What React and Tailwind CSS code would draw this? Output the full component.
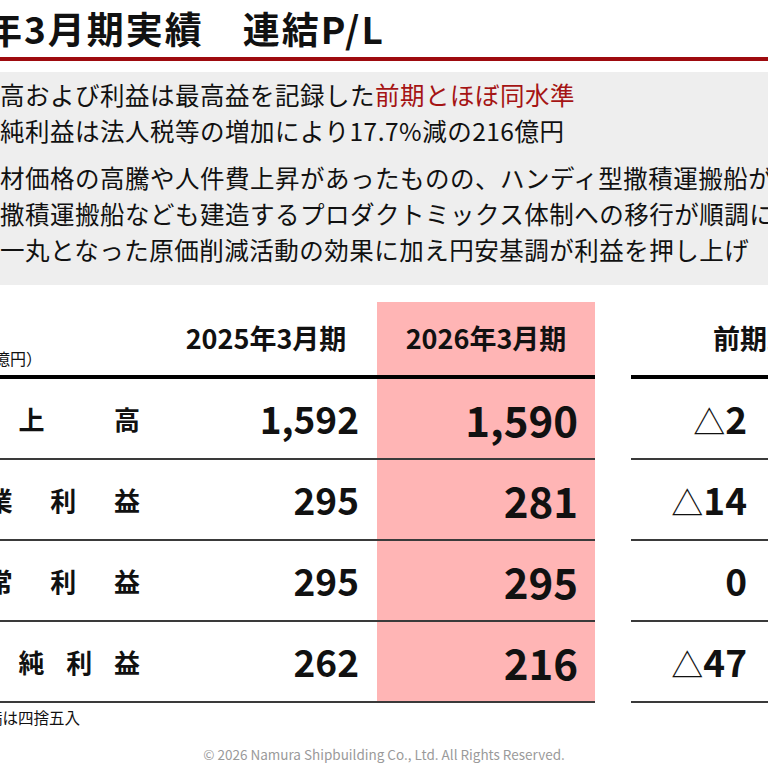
import React from 'react';

const rows = [
  { label: ['売', '上', '高'], prev: '1,592', cur: '1,590', diff: '2', tri: true },
  { label: ['営', '業', '利', '益'], prev: '295', cur: '281', diff: '14', tri: true },
  { label: ['経', '常', '利', '益'], prev: '295', cur: '295', diff: '0', tri: false },
  { label: ['当', '期', '純', '利', '益'], prev: '262', cur: '216', diff: '47', tri: true },
];

const App = () => {
  return (
    <div className="w-[768px] h-[768px] overflow-hidden bg-white text-[#111] [font-family:'Noto_Sans_CJK_JP','Noto_Sans',sans-serif]">
      {/* Title */}
      <div className="h-[57px] flex items-center whitespace-nowrap">
        <h1 className="-ml-[15px] text-[37px] font-bold leading-none tracking-[2px]">年3月期実績　連結P/L</h1>
      </div>
      <div className="h-[4px] bg-[#9e0b0f]" />

      {/* Summary box */}
      <div className="mt-[11px] h-[213px] bg-[#eeeeee] pt-[5px] whitespace-nowrap text-[24.5px] leading-[36px] tracking-[0.5px]">
        <p>
          高および利益は最高益を記録した<span className="text-[#a51414]">前期とほぼ同水準</span>
        </p>
        <p>純利益は法人税等の増加により17.7%減の216億円</p>
        <p className="mt-[11px]">材価格の高騰や人件費上昇があったものの、ハンディ型撒積運搬船が</p>
        <p>撒積運搬船なども建造するプロダクトミックス体制への移行が順調に</p>
        <p>一丸となった原価削減活動の効果に加え円安基調が利益を押し上げ</p>
      </div>

      {/* Table */}
      <div className="mt-[17px] flex">
        {/* Left part */}
        <div className="w-[595px] shrink-0">
          <div className="flex h-[77px] border-b-4 border-black">
            <div className="w-[155px] flex items-end pb-[9px]">
              <span className="-ml-[6px] text-[16px] leading-none whitespace-nowrap">億円）</span>
            </div>
            <div className="w-[222px] flex items-center justify-center text-[27px] font-bold">2025年3月期</div>
            <div className="w-[218px] bg-[#ffb5b5] flex items-center justify-center text-[27px] font-bold">2026年3月期</div>
          </div>
          {rows.map((r) => (
            <div key={r.label.join('')} className="flex h-[81px] border-b-2 border-[#3a3a3a]">
              <div className="w-[155px] flex items-center">
                <div className="-ml-[77px] w-[217px] flex justify-between text-[26px] font-bold leading-none">
                  {r.label.map((c, i) => (
                    <span key={i}>{c}</span>
                  ))}
                </div>
              </div>
              <div className="w-[222px] flex items-center justify-end pr-[18px] text-[37px] font-bold">{r.prev}</div>
              <div className="w-[218px] bg-[#ffb5b5] flex items-center justify-end pr-[17px] text-[42px] font-bold">{r.cur}</div>
            </div>
          ))}
        </div>

        {/* Right part */}
        <div className="ml-[36px] w-[300px] shrink-0">
          <div className="h-[77px] border-b-4 border-black flex items-center pl-[82px] text-[27px] font-bold whitespace-nowrap">
            前期比増減
          </div>
          {rows.map((r) => (
            <div key={r.label.join('')} className="h-[81px] border-b-2 border-[#3a3a3a] flex items-center">
              <div className="w-[137px] text-right pr-[21px] text-[37px] font-bold leading-none">
                {r.tri && <span className="font-normal text-[32px]">△</span>}
                {r.diff}
              </div>
            </div>
          ))}
        </div>
      </div>

      {/* Footnote */}
      <p className="mt-[3px] -ml-[13px] text-[15.5px] leading-[22px] whitespace-nowrap">満は四捨五入</p>

      {/* Copyright */}
      <p className="mt-[16px] text-center text-[13.5px] text-[#9a9a9a]">© 2026 Namura Shipbuilding Co., Ltd. All Rights Reserved.</p>
    </div>
  );
};

export default App;
